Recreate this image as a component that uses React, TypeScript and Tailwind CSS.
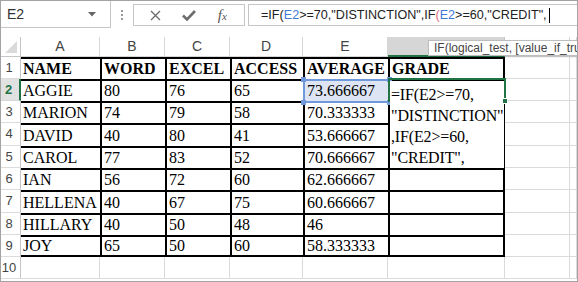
import React from "react";

const HEAD = ["NAME", "WORD", "EXCEL", "ACCESS", "AVERAGE", "GRADE"];

const ROWS = [
  ["AGGIE", "80", "76", "65", "73.666667"],
  ["MARION", "74", "79", "58", "70.333333"],
  ["DAVID", "40", "80", "41", "53.666667"],
  ["CAROL", "77", "83", "52", "70.666667"],
  ["IAN", "56", "72", "60", "62.666667"],
  ["HELLENA", "40", "67", "75", "60.666667"],
  ["HILLARY", "40", "50", "48", "46"],
  ["JOY", "65", "50", "60", "58.333333"],
];

const COLS = ["A", "B", "C", "D", "E", "F", "G", ""];

const serif = "font-['Liberation_Serif',serif] text-[16px] text-black";
const sans = "font-['Liberation_Sans',Arial,sans-serif]";

function Toolbar() {
  return (
    <div className={"flex h-[36px] items-start " + sans}>
      <div className="flex h-[27px] w-[110px] items-center justify-between border-r border-b border-[#c6c6c6] pl-[6px] pr-[14px]">
        <span className="text-[14px] text-[#333]">E2</span>
        <svg width="8" height="5" viewBox="0 0 8 5">
          <polygon points="0,0 8,0 4,4.5" fill="#666" />
        </svg>
      </div>
      <div className="flex h-[27px] w-[22px] flex-col items-center justify-center gap-[2px]">
        <span className="h-[2px] w-[2px] bg-[#9a9a9a]" />
        <span className="h-[2px] w-[2px] bg-[#9a9a9a]" />
        <span className="h-[2px] w-[2px] bg-[#9a9a9a]" />
      </div>
      <div className="mt-[3px] flex h-[22px] w-[112px] items-center border border-[#c6c6c6] px-[5px]">
        <div className="flex w-[35px] justify-center">
          <svg width="11" height="11" viewBox="0 0 11 11">
            <path d="M1 1 L10 10 M10 1 L1 10" stroke="#6e6e6e" strokeWidth="1.4" />
          </svg>
        </div>
        <div className="flex w-[35px] justify-center">
          <svg width="14" height="11" viewBox="0 0 14 11">
            <path d="M1 5.5 L5 9.5 L13 1" stroke="#6e6e6e" strokeWidth="2.6" fill="none" />
          </svg>
        </div>
        <div className="flex w-[35px] justify-center font-['Liberation_Serif',serif] italic text-[#555]">
          <span className="text-[15px] leading-none">f</span>
          <span className="mt-[3px] text-[11px] leading-none">x</span>
        </div>
      </div>
      <div className="ml-[3px] mt-[3px] flex h-[22px] flex-1 items-center whitespace-nowrap border-y border-l border-[#c6c6c6] pl-[12px] text-[12.6px] text-[#222]">
        <span>=IF(</span>
        <span className="text-[#3d7bd6]">E2</span>
        <span>&gt;=70,"DISTINCTION",IF</span>
        <span className="text-[#e3697a]">(</span>
        <span className="text-[#3d7bd6]">E2</span>
        <span>&gt;=60,"CREDIT",</span>
        <span className="ml-[2px] h-[15px] w-px bg-black" />
      </div>
    </div>
  );
}

function HeaderRow() {
  return (
    <>
      <div className="relative border-r border-b border-[#c6c6c6]">
        <svg className="absolute bottom-[3px] right-[3px]" width="12" height="12" viewBox="0 0 12 12">
          <polygon points="12,0 12,12 0,12" fill="#dadada" />
        </svg>
      </div>
      {COLS.map((c, i) => (
        <div
          key={i}
          className={
            "flex items-center justify-center text-[14px] text-[#444] " +
            sans +
            (c === "F"
              ? " border-r border-[#c6c6c6] border-b-2 border-b-[#217346] bg-[#d6d6d6]"
              : " border-r border-b border-[#d6d6d6]")
          }
        >
          {c}
        </div>
      ))}
    </>
  );
}

function RowHead({ n }: { n: number }) {
  const active = n === 2;
  return (
    <div
      className={
        "flex items-center justify-center pr-[3px] text-[13px] " +
        sans +
        (active
          ? " border-r-2 border-[#217346] border-b border-b-[#d6d6d6] bg-[#e1e1e1] font-bold text-[#217346]"
          : " border-r border-b border-[#c6c6c6] border-b-[#dcdcdc] text-[#444]")
      }
    >
      {n}
    </div>
  );
}

function Cell({ row, col, text }: { row: number; col: number; text: string }) {
  // row 1..10, col 0..7 (A..H)
  const inTable = row <= 9 && col <= 5;
  let cls = "flex items-center overflow-hidden whitespace-nowrap pl-[2px] ";
  if (inTable) {
    cls += "border-t-2 border-black ";
    if (col > 0) cls += "border-l-2 pl-[1px] ";
    if (col === 5) cls += "border-r-2 ";
    if (row === 9) cls += "border-b-2 ";
    if (col === 4 && row === 2) cls += "bg-[#dde5f4] ";
  } else {
    cls += "border-r border-b border-[#dadada] ";
  }
  if (row === 1) cls += "font-bold ";
  return <div className={cls + serif}>{text}</div>;
}

export default function App() {
  const data = [HEAD, ...ROWS.map((r) => [...r, ""]), ["", "", "", "", "", ""]];
  return (
    <div className="relative h-[282px] w-[578px] overflow-hidden border border-[#a3a3a3] bg-white">
      <Toolbar />
      <div className="relative">
        <div className="grid grid-cols-[20px_79px_65px_65px_73px_85px_117px_65px_1fr] grid-rows-[20px_22px_22px_22px_23px_22px_22px_23px_22px_22px_22px]">
          <HeaderRow />
          {data.map((r, ri) => (
            <React.Fragment key={ri}>
              <RowHead n={ri + 1} />
              {[...r, "", ""].map((t, ci) => (
                <Cell key={ci} row={ri + 1} col={ci} text={t} />
              ))}
            </React.Fragment>
          ))}
        </div>

        {/* referenced cell E2 */}
        <div className="absolute left-[302px] top-[42px] h-[24px] w-[87px] border-2 border-[#7099dc]" />
        <span className="absolute left-[300px] top-[40px] h-[5px] w-[5px] bg-[#7099dc]" />
        <span className="absolute left-[386px] top-[40px] h-[5px] w-[5px] bg-[#7099dc]" />
        <span className="absolute left-[300px] top-[63px] h-[5px] w-[5px] bg-[#7099dc]" />
        <span className="absolute left-[386px] top-[63px] h-[5px] w-[5px] bg-[#7099dc]" />

        {/* in-cell editor on F2 */}
        <div className={"absolute left-[389px] top-[44px] h-[87px] w-[114px] bg-white pl-[1px] pt-[3px] leading-[21px] tracking-[-0.15px] " + serif}>
          <div className="whitespace-nowrap">=IF(E2&gt;=70,</div>
          <div className="whitespace-nowrap">"DISTINCTION"</div>
          <div className="whitespace-nowrap">,IF(E2&gt;=60,</div>
          <div className="whitespace-nowrap">"CREDIT",</div>
        </div>
        <div className="absolute left-[387px] top-[41px] h-[2px] w-[118px] bg-[#217346]" />
        <div className="absolute left-[387px] top-[41px] h-[24px] w-[2px] bg-[#217346]" />
        <div className="absolute left-[503px] top-[41px] h-[22px] w-[2px] bg-[#217346]" />
        <span className="absolute left-[501px] top-[61px] h-[6px] w-[6px] border border-white bg-[#217346]" />

        {/* function tooltip */}
        <div className={"absolute left-[427px] top-[3px] flex h-[16px] w-[170px] items-center whitespace-nowrap border border-[#bdbdbd] bg-white pl-[5px] text-[12px] text-[#444] shadow-[1px_1px_2px_rgba(0,0,0,0.15)] " + sans}>
          IF(logical_test, [value_if_true], [value_if_false])
        </div>
      </div>
    </div>
  );
}
